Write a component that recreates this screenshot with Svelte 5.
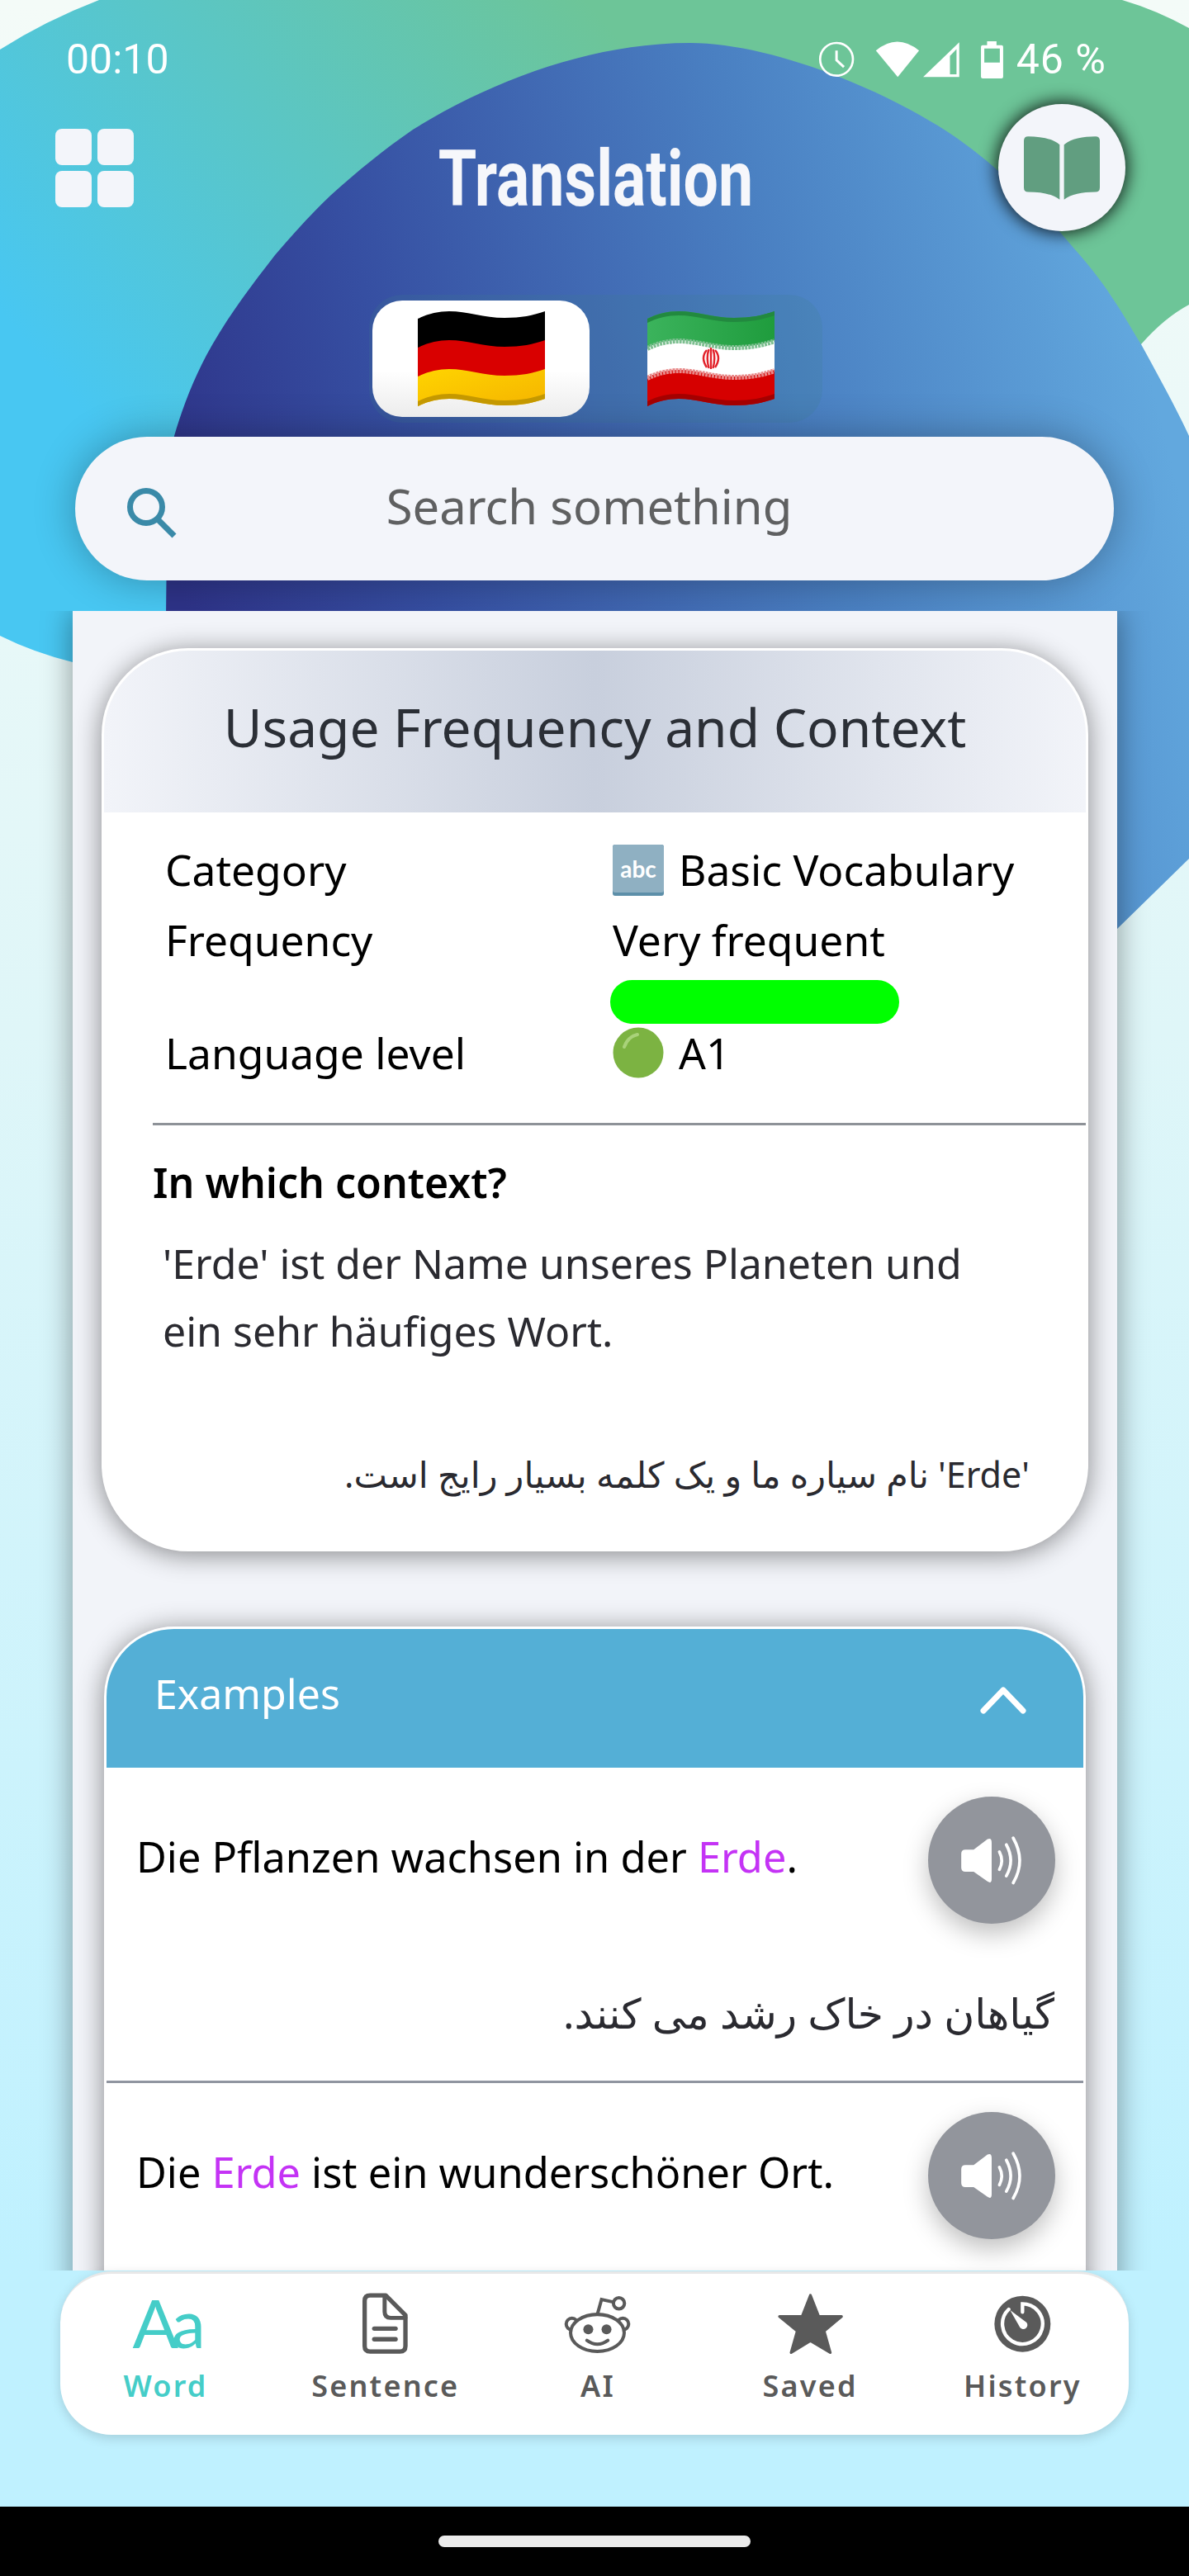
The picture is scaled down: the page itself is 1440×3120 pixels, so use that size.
<script>
  const wave = (o) => `M0 ${9 + o} C12 ${3 + o} 25 ${o} 38 ${o} C60 ${o} 80 ${8 + o} 105 ${8 + o} C125 ${8 + o} 140 ${5 + o} 154 ${o}`
  const waveBack = (o) => `L154 ${o} C140 ${5 + o} 125 ${8 + o} 105 ${8 + o} C80 ${8 + o} 60 ${o} 38 ${o} C25 ${o} 12 ${3 + o} 0 ${9 + o} Z`
  const band = (a, b) => `${wave(a)} ${waveBack(b)}`

  const tabs = ["Word", "Sentence", "AI", "Saved", "History"]
</script>

{#snippet speaker()}
  <button class="speak" aria-label="Play">
    <svg viewBox="70 18 460 460" width="154" height="154">
      <path fill="#fff" d="M190 225 Q190 210 205 210 L235 210 L285 172 Q300 165 300 185 L300 315 Q300 335 285 325 L235 290 L205 290 Q190 290 190 275 Z" />
      <g fill="none" stroke="#fff" stroke-width="11" stroke-linecap="round">
        <path d="M328 218 Q345 250 328 282" />
        <path d="M353 192 Q385 250 353 305" />
        <path d="M378 168 Q425 250 378 330" />
      </g>
    </svg>
  </button>
{/snippet}

<div class="screen">
  <svg class="backdrop" viewBox="0 0 1440 1200" width="1440" height="1200" aria-hidden="true">
    <defs>
      <linearGradient id="teal" gradientUnits="userSpaceOnUse" x1="150" y1="560" x2="760" y2="60">
        <stop offset="0" stop-color="#48c7f2" />
        <stop offset="1" stop-color="#6dc598" />
      </linearGradient>
      <linearGradient id="blue" gradientUnits="userSpaceOnUse" x1="230" y1="760" x2="1400" y2="480">
        <stop offset="0" stop-color="#2e3388" />
        <stop offset="0.25" stop-color="#364fa2" />
        <stop offset="0.65" stop-color="#4a80c2" />
        <stop offset="1" stop-color="#62a8de" />
      </linearGradient>
    </defs>
    <path fill="url(#teal)" d="M0 60 Q55 25 120 0 L1359 0 Q1400 12 1440 34 L1440 369 Q1410 385 1382 417 L1300 700 L88 802 Q40 790 0 770 Z" />
    <path fill="url(#blue)" d="M201 760 C202 650 203 570 211 528 C222 490 238 450 258 416 C280 378 305 345 333 309 C355 283 378 258 400 237 C432 208 465 181 500 157 C600 95 720 52 836 52 C920 52 1040 95 1127 147 C1185 180 1250 240 1300 300 C1345 350 1365 390 1382 417 C1400 450 1425 495 1440 528 L1520 800 L1500 1000 L1440 1040 L1353 1125 L1300 1150 Z" />
  </svg>

  <header class="top">
    <div class="status">
      <span class="time">00:10</span>
      <div class="status-right">
        <svg class="radios" viewBox="100 85 525 145" width="175" height="48">
          <circle cx="168" cy="157" r="60" fill="none" stroke="#fff" stroke-width="8" />
          <path d="M168 125 L168 160 L195 185" fill="none" stroke="#fff" stroke-width="9" />
          <path fill="#fff" d="M312 125 Q390 60 470 125 L392 222 Z" />
          <path fill="#fff" fill-rule="evenodd" d="M485 222 L617 95 L617 222 Z M583 212 L607 212 L607 120 L583 145 Z" />
        </svg>
        <svg viewBox="694 88 80 134" width="27" height="45">
          <path fill="#fff" fill-rule="evenodd" d="M716 88 L750 88 L750 102 L768 102 Q774 102 774 108 L774 216 Q774 222 768 222 L700 222 Q694 222 694 216 L694 108 Q694 102 700 102 L716 102 Z M706 114 L706 165 L762 165 L762 114 Z" />
        </svg>
        <span class="battery">46 %</span>
      </div>
    </div>

    <div class="appbar">
      <div class="menu">
        <i></i><i></i><i></i><i></i>
      </div>
      <h1>Translation</h1>
      <div class="book">
        <svg viewBox="840 430 276 230" width="92" height="77">
          <path fill="#619e80" d="M856 430 C900 430 945 438 970 460 L970 660 C945 640 905 632 856 632 Q840 632 840 616 L840 446 Q840 430 856 430 Z" />
          <path fill="#619e80" d="M1100 430 C1056 430 1011 438 986 460 L986 660 C1011 640 1051 632 1100 632 Q1116 632 1116 616 L1116 446 Q1116 430 1100 430 Z" />
        </svg>
      </div>
    </div>

    <div class="langs">
      <div class="lang active">
        <svg viewBox="0 0 154 115" width="154" height="115">
          <defs>
            <linearGradient id="gold" x1="0" y1="0" x2="1" y2="1">
              <stop offset="0" stop-color="#ffd400" />
              <stop offset="1" stop-color="#f5b400" />
            </linearGradient>
          </defs>
          <path fill="#000" d={band(0, 36)} />
          <path fill="#d90000" d={band(35, 71)} />
          <path fill="url(#gold)" d={band(70, 106)} />
          <path fill="#c49800" d={band(100, 106)} />
        </svg>
      </div>
      <div class="lang">
        <svg viewBox="0 0 154 115" width="154" height="115">
          <defs>
            <linearGradient id="leaf" x1="0" y1="0" x2="1" y2="0">
              <stop offset="0" stop-color="#3bb35c" />
              <stop offset="1" stop-color="#1f9c3d" />
            </linearGradient>
          </defs>
          <path fill="url(#leaf)" d={band(0, 36)} />
          <path fill="#22893f" d={band(0, 5)} />
          <path fill="#fff" d={band(35, 72)} />
          <path fill="#d60000" d={band(71, 106)} />
          <path fill="#a40000" d={band(100, 106)} />
          <path fill="none" stroke="#7dbf90" stroke-width="6" stroke-dasharray="3 1" d={wave(36)} />
          <path fill="none" stroke="#e88a8a" stroke-width="6" stroke-dasharray="3 1" d={wave(72)} />
          <g fill="none" stroke="#e2222a" stroke-width="2.4">
            <path d="M77 44 L77 70" />
            <path d="M72 47 Q64 56 72 68" />
            <path d="M82 47 Q90 56 82 68" />
            <path d="M74.5 46 Q71 56 74.5 69" />
            <path d="M79.5 46 Q83 56 79.5 69" />
          </g>
        </svg>
      </div>
    </div>

    <div class="search">
      <svg viewBox="0 0 62 62" width="62" height="62">
        <circle cx="23" cy="23" r="19.5" fill="none" stroke="#3a8aa8" stroke-width="7" />
        <path d="M38 39 L57 58" stroke="#3a8aa8" stroke-width="7" fill="none" />
      </svg>
      <span>Search something</span>
    </div>
  </header>

  <div class="stage">
    <main class="panel">
      <section class="card usage">
        <div class="usage-head">Usage Frequency and Context</div>
        <div class="facts">
          <span>Category</span>
          <span class="val">
            <svg viewBox="0 0 62 62" width="62" height="62">
              <rect width="62" height="62" rx="3" fill="#5d8fa9" />
              <rect width="62" height="58" rx="3" fill="#8fb0c2" />
              <text x="31" y="40" text-anchor="middle" class="abc">abc</text>
            </svg>
            Basic Vocabulary
          </span>
          <span>Frequency</span>
          <span class="val">Very frequent</span>
          <span></span>
          <div class="meter"></div>
          <span class="level">Language level</span>
          <span class="val level">
            <svg viewBox="0 0 62 62" width="62" height="62">
              <circle cx="31" cy="31" r="30.5" fill="#7cb342" />
              <path d="M14 24 Q18 12 30 9" stroke="#a9d27a" stroke-width="4" fill="none" stroke-linecap="round" />
            </svg>
            A1
          </span>
        </div>
        <hr class="rule" />
        <h2>In which context?</h2>
        <p class="explain">'Erde' ist der Name unseres Planeten und<br />ein sehr häufiges Wort.</p>
        <p class="fa small">'Erde' نام سیاره ما و یک کلمه بسیار رایج است.</p>
      </section>

      <section class="card examples">
        <div class="examples-head">
          <span>Examples</span>
          <svg viewBox="0 0 58 36" width="58" height="36">
            <path d="M5 31 L29 6 L53 31" fill="none" stroke="#fff" stroke-width="7" stroke-linecap="round" stroke-linejoin="round" />
          </svg>
        </div>
        <div class="example">
          <div class="line">
            <span>Die Pflanzen wachsen in der <b>Erde</b>.</span>
            {@render speaker()}
          </div>
          <p class="fa">گیاهان در خاک رشد می کنند.</p>
        </div>
        <div class="example">
          <div class="line">
            <span>Die <b>Erde</b> ist ein wunderschöner Ort.</span>
            {@render speaker()}
          </div>
        </div>
      </section>
    </main>
  </div>

  <nav class="tabs">
    {#each tabs as tab, i}
      <div class="tab" class:on={i === 0}>
        <div class="tab-icon">
          {#if i === 0}
            <span class="aa">Aa</span>
          {:else if i === 1}
            <svg viewBox="935 45 190 240" width="63" height="80">
              <g fill="none" stroke="#5a5a5a" stroke-width="16" stroke-linecap="round" stroke-linejoin="round">
                <path d="M975 60 L1032 60 L1104 132 L1104 245 Q1104 265 1084 265 L975 265 Q955 265 955 245 L955 80 Q955 60 975 60 Z" />
                <path d="M1028 62 L1028 120 Q1028 142 1050 142 L1104 142" stroke-width="15" />
                <path d="M990 181 L1068 181" />
                <path d="M990 220 L1068 220" />
              </g>
            </svg>
          {:else if i === 2}
            <svg viewBox="125 50 260 230" width="87" height="77">
              <g fill="none" stroke="#5a5a5a" stroke-width="12">
                <circle cx="163" cy="163" r="21" />
                <circle cx="347" cy="163" r="21" />
                <ellipse cx="255" cy="195" rx="97" ry="67" fill="#fff" />
                <path d="M255 128 L270 74 L315 84" />
                <circle cx="333" cy="88" r="20" />
                <path d="M217 222 Q255 250 293 222" stroke-linecap="round" />
              </g>
              <circle cx="222" cy="182" r="18" fill="#5a5a5a" />
              <circle cx="288" cy="182" r="18" fill="#5a5a5a" />
            </svg>
          {:else if i === 3}
            <svg viewBox="895 45 260 240" width="87" height="80">
              <path fill="#5a5a5a" stroke="#5a5a5a" stroke-width="10" stroke-linejoin="round" d="M1025 60 L1055 137 L1138 137 L1075 190 L1097 268 L1025 225 L955 268 L977 190 L913 137 L995 137 Z" />
            </svg>
          {:else}
            <svg viewBox="305 55 225 225" width="75" height="75">
              <circle cx="417" cy="165" r="102" fill="#5a5a5a" />
              <path d="M417 122 L417 92 A73 73 0 1 1 367 112" fill="none" stroke="#fff" stroke-width="13" stroke-linecap="round" />
              <path fill="#fff" d="M372 115 L432 160 A15 15 0 0 1 408 178 Z" />
            </svg>
          {/if}
        </div>
        <span class="tab-label">{tab}</span>
      </div>
    {/each}
  </nav>

  <div class="syspad"></div>
  <div class="sysbar"><div class="home"></div></div>
</div>

<style>
  :global(body) {
    margin: 0;
  }

  .screen {
    position: relative;
    width: 1440px;
    height: 3120px;
    overflow: hidden;
    display: flex;
    flex-direction: column;
    background: linear-gradient(180deg, #f4fbf8 0%, #dff6f8 40%, #bff1ff 88%);
    font-family: "Noto Sans", "DejaVu Sans", sans-serif;
    color: #000;
  }

  .backdrop {
    position: absolute;
    top: 0;
    left: 0;
  }

  .top {
    position: relative;
    padding: 44px 0 37px;
  }

  .status {
    display: flex;
    justify-content: space-between;
    align-items: center;
    height: 56px;
    padding: 0 100px 0 80px;
    color: #fff;
    font-family: "Roboto", sans-serif;
    font-size: 50px;
  }

  .status-right {
    display: flex;
    align-items: center;
    gap: 12px;
  }

  .radios {
    margin-right: 11px;
  }

  .battery {
    margin-left: 4px;
    letter-spacing: 1px;
  }

  .appbar {
    display: grid;
    grid-template-columns: 1fr auto 1fr;
    align-items: center;
    height: 206px;
    padding: 0 77px 0 67px;
  }

  .menu {
    display: grid;
    grid-template-columns: 44px 44px;
    grid-auto-rows: 44px;
    gap: 7px;
  }

  .menu i {
    background: #f3f5fa;
    border-radius: 8px;
  }

  h1 {
    margin: 27px 0 0;
    color: #f6f7fb;
    font-family: "Roboto", sans-serif;
    font-size: 94px;
    font-weight: 700;
    line-height: 1;
    transform: translateX(6px) scaleX(0.8);
  }

  .book {
    justify-self: end;
    width: 154px;
    height: 154px;
    border-radius: 50%;
    background: #f3f5fa;
    box-shadow: 0 0 20px 3px rgba(0, 0, 0, 0.8);
    display: flex;
    align-items: center;
    justify-content: center;
  }

  .langs {
    width: 541px;
    margin: 51px auto 0 447px;
    padding: 7px 4px;
    display: grid;
    grid-template-columns: 263px 263px;
    gap: 15px;
    border-radius: 40px;
    background: rgba(60, 130, 140, 0.18);
  }

  .lang {
    height: 141px;
    border-radius: 36px;
    display: flex;
    align-items: center;
    justify-content: center;
  }

  .lang.active {
    background: linear-gradient(180deg, #fff 60%, #ececec 100%);
  }

  .search {
    margin: 17px 91px 0;
    height: 174px;
    border-radius: 87px;
    background: #f3f5fa;
    box-shadow: 0 0 50px rgba(0, 0, 0, 0.3);
    display: flex;
    align-items: center;
    padding: 0 138px 0 63px;
    color: #5f6061;
    font-size: 58px;
  }

  .search svg {
    margin-top: 12px;
  }

  .search span {
    flex: 1;
    margin-top: -8px;
    text-align: center;
  }

  .stage {
    position: relative;
    height: 2010px;
    overflow: hidden;
    padding: 0 87px 0 88px;
  }

  .panel {
    height: 2200px;
    padding: 45px 35px 0;
    background: #f2f4f9;
    box-shadow: 0 0 34px rgba(0, 0, 0, 0.4);
  }

  .card {
    background: #fff;
    border: 3px solid #fff;
    box-shadow: 0 4px 32px rgba(0, 0, 0, 0.45);
    overflow: hidden;
  }

  .usage {
    border-radius: 105px;
  }

  .usage-head {
    height: 196px;
    padding-bottom: 12px;
    box-sizing: border-box;
    display: flex;
    align-items: center;
    justify-content: center;
    font-size: 64px;
    color: #2b2f36;
    background: linear-gradient(90deg, #f2f4f9 0%, #c8cfdd 50%, #f2f4f9 100%);
  }

  .facts {
    display: grid;
    grid-template-columns: 542px 1fr;
    padding: 27px 0 0 74px;
    font-size: 51.5px;
    line-height: 85px;
  }

  .val {
    display: flex;
    align-items: center;
    gap: 18px;
  }

  .abc {
    font-family: "Lato", sans-serif;
    font-size: 28px;
    font-weight: 700;
    fill: #fff;
  }

  .meter {
    width: 350px;
    height: 53px;
    margin: 6px 0 0 -3px;
    border-radius: 27px;
    background: #00ff00;
  }

  .level {
    line-height: 70px;
  }

  .rule {
    margin: 50px 0 0 59px;
    border: 0;
    height: 3px;
    background: #8e9298;
  }

  h2 {
    margin: 34px 0 0 59px;
    font-size: 50px;
    font-weight: 600;
    line-height: 70px;
  }

  .explain {
    margin: 22px 0 0 71px;
    font-size: 50px;
    line-height: 82px;
    color: #2a2a30;
  }

  .fa {
    margin: 65px 35px 0 0;
    direction: rtl;
    font-family: "Noto Sans", "DejaVu Sans", sans-serif;
    font-size: 50.5px;
    line-height: 85px;
    color: #2a2a30;
  }

  .fa.small {
    margin: 90px 68px 0 0;
    font-size: 43px;
    padding-bottom: 48px;
  }

  .examples {
    margin: 91px 3px 0;
    border-radius: 85px;
  }

  .examples-head {
    height: 168px;
    padding: 43px 68px 0 58px;
    box-sizing: border-box;
    display: flex;
    justify-content: space-between;
    background: #54afd6;
    color: #fff;
    font-size: 50px;
    line-height: 70px;
  }

  .examples-head svg {
    margin-top: 25px;
  }

  .example {
    padding: 35px 0 40px 36px;
    border-bottom: 3px solid #9095a0;
  }

  .example:last-child {
    padding-bottom: 300px;
    border-bottom: 0;
  }

  .line {
    display: flex;
    justify-content: space-between;
    align-items: center;
    padding-right: 34px;
    font-size: 50.5px;
  }

  .line span {
    margin-top: -10px;
  }

  .line b {
    font-weight: 400;
    color: #c433f5;
  }

  .speak {
    width: 154px;
    height: 154px;
    padding: 0;
    border: 0;
    border-radius: 50%;
    background: #92959c;
    box-shadow: 0 12px 30px rgba(0, 0, 0, 0.25);
  }

  .speak svg {
    display: block;
  }

  .tabs {
    position: relative;
    box-sizing: border-box;
    height: 198px;
    margin: 1px 73px 0;
    padding: 24px 0 0 8px;
    display: grid;
    grid-template-columns: repeat(5, 1fr);
    background: #fff;
    border-top: 3px solid #e8e8e8;
    border-radius: 62px;
    box-shadow: 0 4px 14px rgba(0, 0, 0, 0.15);
  }

  .tab {
    display: flex;
    flex-direction: column;
    align-items: center;
    color: #5a5a5a;
  }

  .tab.on {
    margin-left: -18px;
    color: #45cdc8;
  }

  .tab-icon {
    height: 80px;
    margin-top: -3px;
    display: flex;
    align-items: center;
    justify-content: center;
  }

  .aa {
    margin-top: -6px;
    font-family: "Lato", sans-serif;
    font-size: 82px;
    line-height: 80px;
    letter-spacing: -8px;
  }

  .tab-label {
    margin-top: 12px;
    font-size: 36px;
    font-weight: 600;
    letter-spacing: 2.2px;
    line-height: 46px;
  }

  .syspad {
    flex: 1;
  }

  .sysbar {
    height: 84px;
    background: #000;
    display: flex;
    justify-content: center;
    padding-top: 35px;
    box-sizing: border-box;
  }

  .home {
    width: 378px;
    height: 14px;
    border-radius: 7px;
    background: #ebebeb;
  }
</style>
